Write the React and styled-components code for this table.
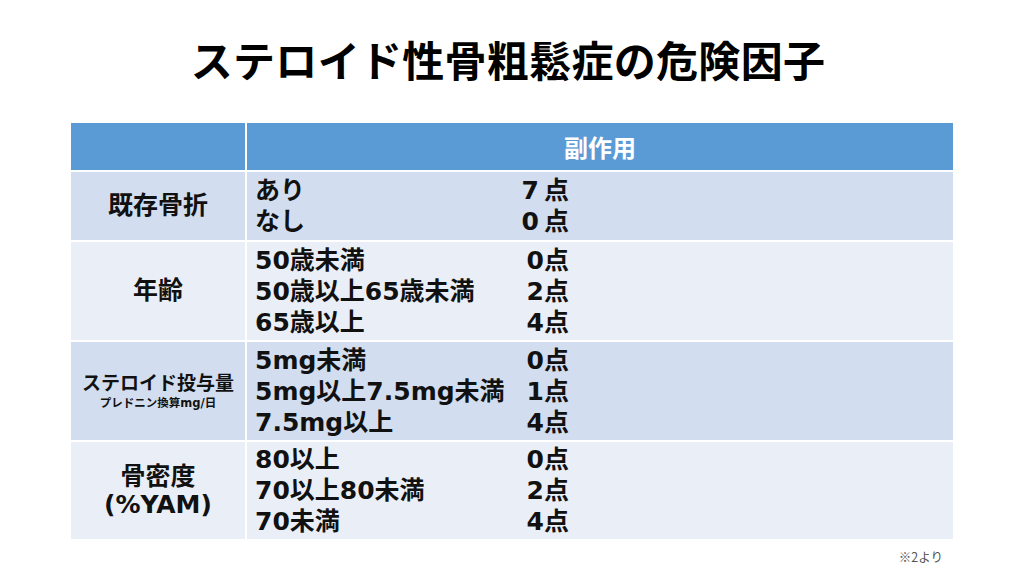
import React from 'react';
import styled, { createGlobalStyle } from 'styled-components';

const GlobalStyle = createGlobalStyle`
  body {
    margin: 0;
    background: #ffffff;
  }
`;

const Page = styled.div`
  width: 1024px;
  height: 576px;
  display: flex;
  flex-direction: column;
  align-items: center;
  font-family: "DejaVu Sans", "Noto Sans CJK JP", sans-serif;
  color: #111;
`;

const Title = styled.h1`
  margin: 0;
  height: 123px;
  display: flex;
  align-items: center;
  padding: 0 8px 6px 0;
  box-sizing: border-box;
  font-family: "Noto Sans CJK JP", sans-serif;
  font-weight: 700;
  font-size: 42px;
  letter-spacing: 0.3px;
  color: #000;
`;

const Table = styled.div`
  width: 882px;
  display: grid;
  grid-template-columns: 174px 1fr;
  grid-template-rows: 47px 68px 98px 98px 97px;
  gap: 2px;
  background: #ffffff;
`;

const HeadCell = styled.div`
  background: #5b9bd5;
  display: flex;
  align-items: center;
  justify-content: center;
  color: #ffffff;
  font-family: "Noto Sans CJK JP", sans-serif;
  font-weight: 700;
  font-size: 24px;
`;

const LabelCell = styled.div`
  background: ${p => (p.$band ? '#d2deef' : '#eaeff7')};
  display: flex;
  flex-direction: column;
  align-items: center;
  justify-content: center;
  text-align: center;
  font-weight: 700;
  font-size: ${p => p.$size || 25}px;
  line-height: ${p => (p.$size ? 24 : 28)}px;
`;

const SubLabel = styled.span`
  font-size: 11.5px;
  line-height: 16px;
  font-weight: 700;
`;

const ValueCell = styled.div`
  background: ${p => (p.$band ? '#d2deef' : '#eaeff7')};
  display: grid;
  grid-template-columns: 258px 56px;
  align-content: center;
  padding-left: 8px;
  font-weight: 700;
  font-size: 25px;
  line-height: 31px;
`;

const Option = styled.span`
  white-space: nowrap;
`;

const Score = styled.span`
  text-align: right;
  white-space: nowrap;
`;

const Note = styled.div`
  width: 882px;
  text-align: right;
  padding-right: 10px;
  box-sizing: border-box;
  margin-top: 8px;
  font-family: "Noto Sans CJK JP", sans-serif;
  font-size: 12.5px;
  color: #555;
`;

const rows = [
  {
    label: ['既存骨折'],
    band: true,
    items: [['あり', '7\u2009点'], ['なし', '0\u2009点']],
  },
  {
    label: ['年齢'],
    items: [['50歳未満', '0点'], ['50歳以上65歳未満', '2点'], ['65歳以上', '4点']],
  },
  {
    label: ['ステロイド投与量'],
    sub: 'プレドニン換算mg/日',
    size: 19,
    band: true,
    items: [['5mg未満', '0点'], ['5mg以上7.5mg未満', '1点'], ['7.5mg以上', '4点']],
  },
  {
    label: ['骨密度', '(%YAM)'],
    items: [['80以上', '0点'], ['70以上80未満', '2点'], ['70未満', '4点']],
  },
];

export default function App() {
  return (
    <Page>
      <GlobalStyle />
      <Title>ステロイド性骨粗鬆症の危険因子</Title>
      <Table>
        <HeadCell />
        <HeadCell>副作用</HeadCell>
        {rows.map((r, i) => (
          <React.Fragment key={i}>
            <LabelCell $band={r.band} $size={r.size}>
              {r.label.map(l => <span key={l}>{l}</span>)}
              {r.sub && <SubLabel>{r.sub}</SubLabel>}
            </LabelCell>
            <ValueCell $band={r.band}>
              {r.items.map(([a, b]) => (
                <React.Fragment key={a}>
                  <Option>{a}</Option>
                  <Score>{b}</Score>
                </React.Fragment>
              ))}
            </ValueCell>
          </React.Fragment>
        ))}
      </Table>
      <Note>※2より</Note>
    </Page>
  );
}
